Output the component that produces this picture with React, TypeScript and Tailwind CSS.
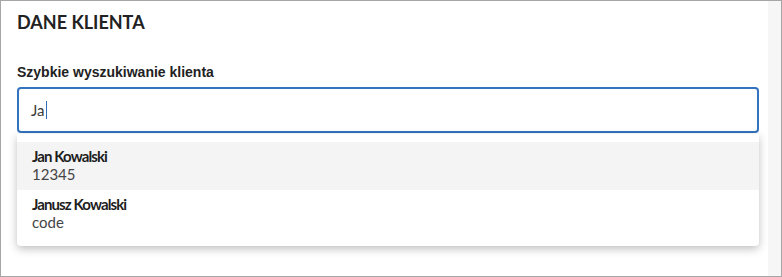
import { FunctionComponent } from "react";

interface Client {
  name: string;
  code: string;
}

const clients: Client[] = [
  { name: "Jan Kowalski", code: "12345" },
  { name: "Janusz Kowalski", code: "code" },
];

const lato = { fontFamily: "Lato, 'Noto Sans', sans-serif" };

const ClientOption: FunctionComponent<{ client: Client; active?: boolean }> = ({ client, active }) => (
  <div className={`h-[48px] px-[15px] pt-[5px] ${active ? "bg-[#f4f4f4]" : "bg-white"}`}>
    <div className="text-[15px] font-bold leading-[18px] tracking-[-0.9px] text-[#1d1d1d]">{client.name}</div>
    <div className="text-[15px] leading-[18px] text-[#454545]">{client.code}</div>
  </div>
);

const App: FunctionComponent = () => {
  return (
    <div className="flex h-[277px] w-[782px] border border-[#a6a6a6] bg-white" style={lato}>
      <div className="flex-1 pl-4 pr-[9px] pt-[11px]">
        <h2 className="text-[18px] font-bold leading-[20px] text-[#222]">DANE KLIENTA</h2>

        <label
          className="mt-[32px] block text-[14px] font-bold leading-[16px] text-[#222]"
          style={{ fontFamily: "'Liberation Sans', Arial, sans-serif" }}
        >
          Szybkie wyszukiwanie klienta
        </label>

        <div className="relative mt-[7px]">
          <div className="flex h-[46px] items-center rounded-[4px] border-2 border-[#3372bd] pl-3">
            <span className="text-[15px] text-[#3a3a3a]">Ja</span>
            <span className="ml-px h-[18px] w-px bg-[#2f6db5]" />
          </div>

          <div className="absolute left-0 right-0 top-[47px] rounded-b-[4px] bg-white py-2 shadow-[0_3px_8px_rgba(0,0,0,0.25)]">
            {clients.map((c, i) => (
              <ClientOption key={c.name} client={c} active={i === 0} />
            ))}
          </div>
        </div>
      </div>
      <div className="w-[13px] bg-[#f6f6f6]" />
    </div>
  );
};

export default App;
